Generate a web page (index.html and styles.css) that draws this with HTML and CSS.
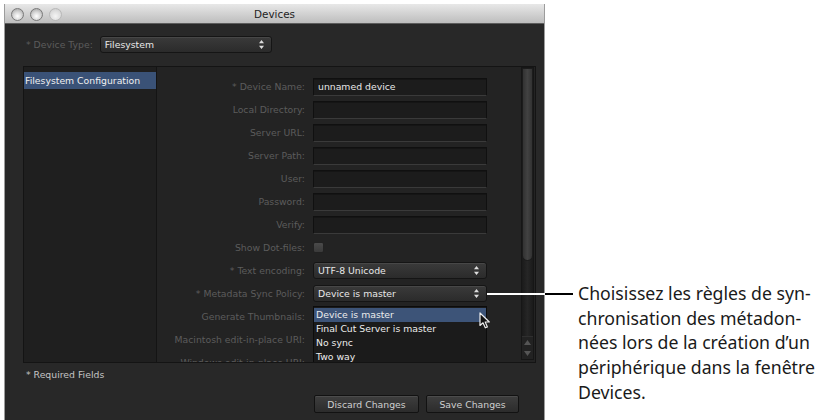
FILE: index.html
```html
<!DOCTYPE html>
<html lang="fr">
  <head>
    <meta charset="UTF-8" />
    <title>Devices</title>
    <link rel="stylesheet" href="styles.css">
  </head>
  <body>
    <div class="window">
      <div class="titlebar">
        <div class="lights">
          <span class="light"></span>
          <span class="light"></span>
          <span class="light off"></span>
        </div>
        <div class="title">Devices</div>
      </div>

      <div class="toolbar">
        <span class="label">* Device Type:</span>
        <div class="select type-select">
          <span>Filesystem</span>
          <svg class="arrows" width="5" height="9" viewBox="0 0 5 9"><path d="M2.5 0 L5 3.2 L0 3.2 Z M2.5 9 L5 5.8 L0 5.8 Z" fill="#ddd"/></svg>
        </div>
      </div>

      <div class="panes">
        <div class="sidebar">
          <div class="side-item selected">Filesystem Configuration</div>
        </div>
        <div class="main">
          <div class="form">
            <label>* Device Name:</label><div class="input">unnamed device</div>
            <label>Local Directory:</label><div class="input"></div>
            <label>Server URL:</label><div class="input"></div>
            <label>Server Path:</label><div class="input"></div>
            <label>User:</label><div class="input"></div>
            <label>Password:</label><div class="input"></div>
            <label>Verify:</label><div class="input"></div>
            <label>Show Dot-files:</label><div><span class="check"></span></div>
            <label>* Text encoding:</label>
            <div class="select">
              <span>UTF-8 Unicode</span>
              <svg class="arrows" width="5" height="9" viewBox="0 0 5 9"><path d="M2.5 0 L5 3.2 L0 3.2 Z M2.5 9 L5 5.8 L0 5.8 Z" fill="#ddd"/></svg>
            </div>
            <label>* Metadata Sync Policy:</label>
            <div class="select">
              <span>Device is master</span>
              <svg class="arrows" width="5" height="9" viewBox="0 0 5 9"><path d="M2.5 0 L5 3.2 L0 3.2 Z M2.5 9 L5 5.8 L0 5.8 Z" fill="#ddd"/></svg>
            </div>
            <label>Generate Thumbnails:</label><div></div>
            <label>Macintosh edit-in-place URI:</label><div></div>
            <label>Windows edit-in-place URI:</label><div></div>
          </div>

          <div class="scrollbar">
            <div class="thumb"></div>
            <div class="steppers">
              <svg width="7" height="5" viewBox="0 0 7 5"><path d="M3.5 0 L7 5 L0 5 Z" fill="#555"/></svg>
              <svg width="7" height="5" viewBox="0 0 7 5"><path d="M3.5 5 L7 0 L0 0 Z" fill="#555"/></svg>
            </div>
          </div>

          <ul class="menu">
            <li class="active">Device is master</li>
            <li>Final Cut Server is master</li>
            <li>No sync</li>
            <li>Two way</li>
          </ul>
          <svg class="cursor" width="12" height="17" viewBox="0 0 12 17">
            <path d="M1 1 L1 13.5 L4 10.8 L6.3 15.8 L8.4 14.9 L6.2 10 L10.3 10 Z" fill="#111" stroke="#eee" stroke-width="1.2" stroke-linejoin="round"/>
          </svg>
        </div>
      </div>

      <div class="required">* Required Fields</div>

      <div class="actions">
        <button>Discard Changes</button>
        <button class="save">Save Changes</button>
      </div>
    </div>

    <div class="leader"></div>

    <p class="note">Choisissez les règles de syn-<br>chronisation des métadon-<br>nées lors de la création d’un<br>périphérique dans la fenêtre<br>Devices.</p>
  </body>
</html>
```

FILE: styles.css
```css
body {
  margin: 0;
  background: #ffffff;
  display: flex;
  align-items: flex-start;
  height: 420px;
  overflow: hidden;
  position: relative;
}

.window {
  width: 539px;
  height: 416px;
  margin: 4px 0 0 4px;
  background: #282828;
  border-left: 1px solid #9c9c9c;
  border-right: 1px solid #9c9c9c;
  font-family: "DejaVu Sans", sans-serif;
  font-size: 9.3px;
  color: #e0e0e0;
  flex-shrink: 0;
}

.titlebar {
  height: 20px;
  background: linear-gradient(#e8e8e8, #bdbdbd);
  border-bottom: 1px solid #5c5c5c;
  box-sizing: border-box;
  position: relative;
  display: flex;
  align-items: center;
  justify-content: center;
}

.lights {
  position: absolute;
  left: 6px;
  top: 4px;
  display: flex;
  gap: 6px;
}

.light {
  width: 11px;
  height: 11px;
  border-radius: 50%;
  border: 1px solid #7a7a7a;
  background: radial-gradient(circle at 50% 65%, #ffffff 0, #d8d8d8 45%, #9a9a9a 100%);
}

.light.off {
  border-color: #b8b8b8;
  background: radial-gradient(circle at 50% 65%, #f4f4f4 0, #dcdcdc 60%, #c4c4c4 100%);
}

.title {
  font-size: 10.4px;
  color: #1e1e1e;
}

.toolbar {
  margin-top: 12px;
  padding-left: 21px;
  height: 17px;
  display: flex;
  align-items: center;
  gap: 7px;
}

.label,
.form label {
  color: #5c5c5c;
}

.select {
  height: 17px;
  box-sizing: border-box;
  border: 1px solid #151515;
  border-radius: 3px;
  background: linear-gradient(#3a3a3a, #2b2b2b);
  box-shadow: inset 0 1px 0 #474747;
  display: flex;
  align-items: center;
  justify-content: space-between;
  padding: 0 7px 0 4px;
  color: #e8e8e8;
}

.type-select {
  width: 172px;
}

.arrows {
  display: block;
}

.panes {
  margin: 13px 8px 0 18px;
  height: 297px;
  display: flex;
}

.sidebar {
  width: 132px;
  background: #1f1f1f;
  border: 1px solid #141414;
  border-right: none;
  padding-top: 5px;
}

.side-item {
  height: 17px;
  line-height: 17px;
  padding-left: 1px;
  color: #f0f0f0;
}

.side-item.selected {
  background: #3a5277;
}

.main {
  flex: 1;
  position: relative;
  border: 1px solid #141414;
  background: #232323;
  display: flex;
  overflow: hidden;
}

.form {
  flex: 1;
  padding-top: 8px;
  display: grid;
  grid-template-columns: 148px 174px;
  grid-auto-rows: 23px;
  column-gap: 8px;
  align-items: center;
}

.form label {
  text-align: right;
  white-space: nowrap;
}

.input {
  height: 18px;
  box-sizing: border-box;
  background: #1c1c1c;
  border: 1px solid #101010;
  border-bottom-color: #3a3a3a;
  box-shadow: inset 0 1px 0 #151515;
  padding-left: 4px;
  line-height: 16px;
  color: #e8e8e8;
}

.check {
  display: block;
  width: 11px;
  height: 11px;
  box-sizing: border-box;
  border: 1px solid #222;
  border-radius: 2px;
  background: linear-gradient(#4a4a4a, #3a3a3a);
}

.scrollbar {
  width: 13px;
  margin: 0 1px 2px 0;
  background: linear-gradient(to right, #1a1a1a, #262626, #1a1a1a);
  border: 1px solid #161616;
  box-sizing: border-box;
  display: flex;
  flex-direction: column;
  justify-content: space-between;
}

.thumb {
  height: 191px;
  border-radius: 0 0 6px 6px;
  background: linear-gradient(to right, #323232, #424242, #323232);
  border: 1px solid #1c1c1c;
}

.steppers {
  height: 22px;
  display: flex;
  flex-direction: column;
  align-items: center;
  justify-content: space-around;
  background: #222;
  border-top: 1px solid #2f2f2f;
}

.steppers svg {
  display: block;
}

.menu {
  position: absolute;
  left: 156px;
  top: 239px;
  width: 174px;
  height: 58px;
  box-sizing: border-box;
  margin: 0;
  padding: 1px 0 0;
  list-style: none;
  background: #1b1b1b;
  border: 1px solid #0c0c0c;
  color: #ececec;
}

.menu li {
  height: 14px;
  line-height: 13px;
  padding-left: 2px;
}

.menu li.active {
  background: #3d5478;
}

.cursor {
  position: absolute;
  left: 322px;
  top: 245px;
}

.required {
  margin-top: 6px;
  padding-left: 21px;
  height: 12px;
  line-height: 12px;
  color: #c4c4c4;
}

.actions {
  margin-top: 14px;
  padding-right: 25px;
  display: flex;
  justify-content: flex-end;
  gap: 7px;
}

.actions button {
  height: 18px;
  width: 105px;
  padding: 0;
  font-family: inherit;
  font-size: 9.3px;
  color: #cfcfcf;
  border: 1px solid #121212;
  border-radius: 2px;
  background: linear-gradient(#3e3e3e, #2c2c2c);
  box-shadow: inset 0 1px 0 #4c4c4c;
}

.actions .save {
  width: 93px;
}

.leader {
  position: absolute;
  left: 487px;
  top: 293px;
  width: 86px;
  height: 2px;
  background: linear-gradient(to right, #ffffff 58px, #000000 58px);
}

.note {
  margin: 281px 0 0 33px;
  font-family: "Noto Sans", sans-serif;
  font-size: 17.7px;
  line-height: 24.7px;
  color: #1a1a1a;
  white-space: nowrap;
}
```
